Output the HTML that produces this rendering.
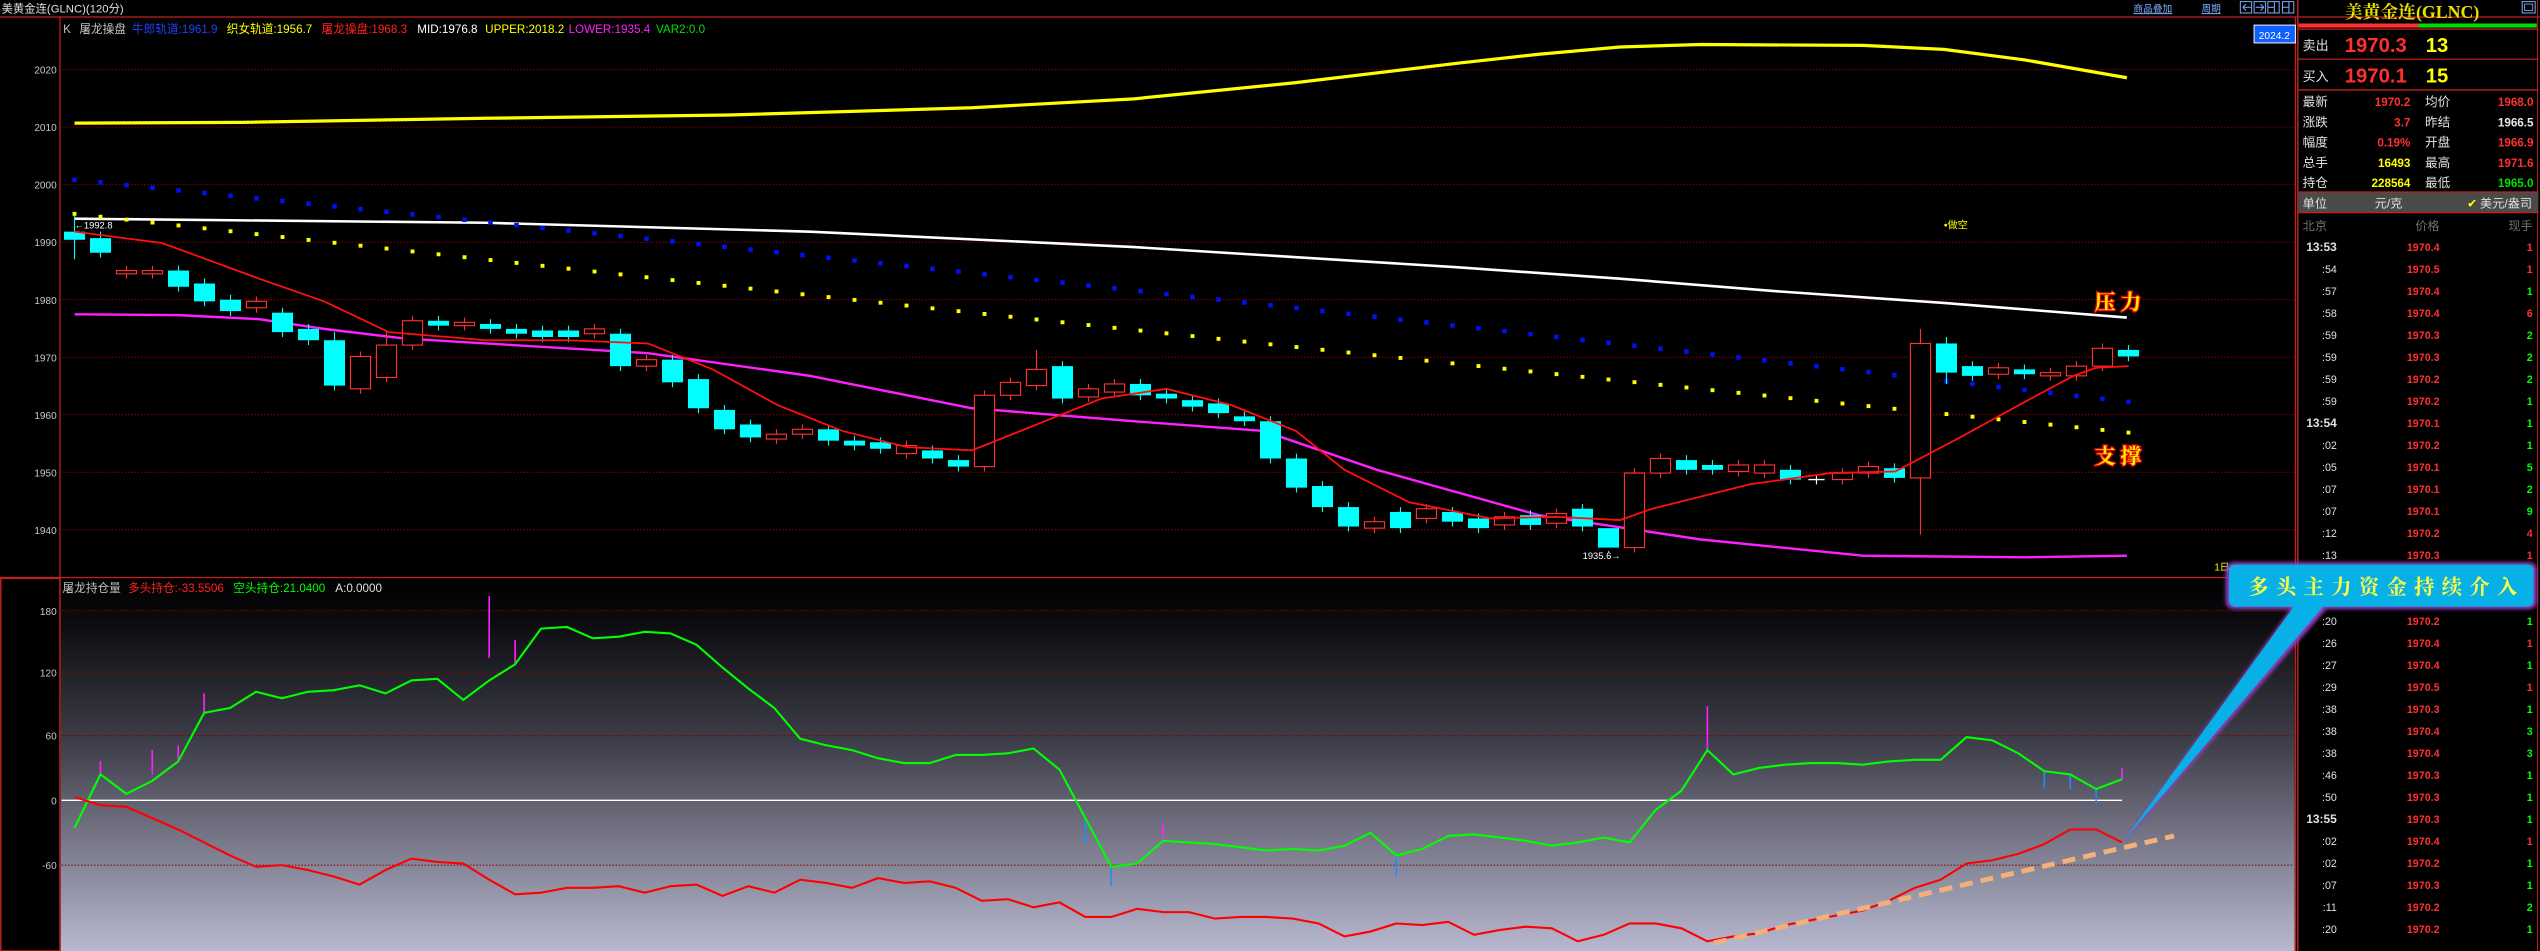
<!DOCTYPE html>
<html><head><meta charset="utf-8"><style>
html,body{margin:0;padding:0;background:#000;overflow:hidden}
svg{display:block}
text{font-family:"Liberation Sans","Noto Sans CJK SC",sans-serif}
.s{font-family:"Liberation Serif","Noto Serif CJK SC",serif}
</style></head><body>
<svg id="s" xmlns="http://www.w3.org/2000/svg" width="2540" height="951" viewBox="0 0 1568 587" preserveAspectRatio="none">
<defs>
<linearGradient id="lg" x1="0" y1="357" x2="0" y2="587" gradientUnits="userSpaceOnUse">
<stop offset="0" stop-color="#000"/><stop offset="0.12" stop-color="#0c0c10"/><stop offset="0.45" stop-color="#40404c"/><stop offset="1" stop-color="#b8b8d0"/>
</linearGradient>
<filter id="gl" x="-20%" y="-20%" width="140%" height="140%"><feGaussianBlur stdDeviation="1.2"/></filter>
</defs>
<rect width="1568" height="587" fill="#000"/>
<text x="1" y="7.8" font-size="7" fill="#e0e0e0">美黄金连(GLNC)(120分)</text>
<text x="1317" y="7.5" font-size="6" fill="#80b0ff" text-decoration="underline">商品叠加</text>
<text x="1359" y="7.5" font-size="6" fill="#80b0ff" text-decoration="underline">周期</text>
<g fill="none" stroke="#80b0ff" stroke-width="0.6">
<rect x="1383" y="1" width="7" height="7"/><path d="M1384.5 4.5h5M1384.5 4.5l2-2M1384.5 4.5l2 2"/>
<rect x="1391.5" y="1" width="7" height="7"/><path d="M1392.5 4.5h5M1397.5 4.5l-2-2M1397.5 4.5l-2 2"/>
<rect x="1400" y="1" width="7" height="7"/><path d="M1400 4.5h4M1404 1v7"/>
<rect x="1409" y="1" width="7" height="7"/><path d="M1409 4.5h4M1413 1v7"/>
</g>
<line x1="0" y1="10.5" x2="1568" y2="10.5" stroke="#c02020" stroke-width="0.8"/>
<line x1="37" y1="10" x2="37" y2="587" stroke="#c02020" stroke-width="0.8"/>
<line x1="1417" y1="10" x2="1417" y2="587" stroke="#c02020" stroke-width="0.8"/>
<g stroke="#8a0000" stroke-width="0.6" stroke-dasharray="1,1">
<line x1="37" y1="43" x2="1416" y2="43"/><line x1="37" y1="78.5" x2="1416" y2="78.5"/><line x1="37" y1="114" x2="1416" y2="114"/><line x1="37" y1="149.5" x2="1416" y2="149.5"/><line x1="37" y1="185" x2="1416" y2="185"/><line x1="37" y1="220.5" x2="1416" y2="220.5"/><line x1="37" y1="256" x2="1416" y2="256"/><line x1="37" y1="291.5" x2="1416" y2="291.5"/><line x1="37" y1="327" x2="1416" y2="327"/>
</g>
<g font-size="6.2" fill="#c8c8c8" text-anchor="end">
<text x="35" y="45.5">2020</text><text x="35" y="81">2010</text><text x="35" y="116.5">2000</text><text x="35" y="152">1990</text><text x="35" y="187.5">1980</text><text x="35" y="223">1970</text><text x="35" y="258.5">1960</text><text x="35" y="294">1950</text><text x="35" y="329.5">1940</text>
</g>
<g font-size="7.2">
<text x="39" y="20.5" fill="#c0c0c0">K</text>
<text x="49" y="20.5" fill="#c0c0c0">屠龙操盘</text>
<text x="81.5" y="20.5" fill="#2040ff">牛郎轨道:1961.9</text>
<text x="140" y="20.5" fill="#ffff00">织女轨道:1956.7</text>
<text x="198.5" y="20.5" fill="#ff2020">屠龙操盘:1968.3</text>
<text x="257.6" y="20.5" fill="#ffffff">MID:1976.8</text>
<text x="299.5" y="20.5" fill="#ffff00">UPPER:2018.2</text>
<text x="351" y="20.5" fill="#ff20ff">LOWER:1935.4</text>
<text x="405" y="20.5" fill="#00e000">VAR2:0.0</text>
</g>
<rect x="1391.5" y="15.5" width="25.5" height="11" fill="#1060ff" stroke="#fff" stroke-width="0.6"/>
<text x="1404" y="24" font-size="6.3" fill="#fff" text-anchor="middle">2024.2</text>
<polyline fill="none" stroke="#ffff00" stroke-width="2" points="46,76 150,75.5 300,73 450,71 600,66.5 700,61 800,51 900,39 950,33.5 1000,29 1050,27.5 1150,28 1200,30.5 1250,37 1313,48"/>
<polyline fill="none" stroke="#ffffff" stroke-width="1.6" points="46,135 300,137.5 500,143 700,152.5 900,165 1000,172 1100,180 1200,187 1250,191 1313,196"/>
<g id="dots"></g>
<polyline fill="none" stroke="#ff20ff" stroke-width="1.5" points="46,194 110,194.5 160,197 200,203 250,209 300,212 400,218 500,232 600,252 700,260 780,266 850,290 950,318 1050,333 1150,343 1250,344 1313,343"/>
<g id="cand"></g>
<polyline fill="none" stroke="#ff1010" stroke-width="1.1" points="46,143 100,150 160,172 200,186 240,205 300,210 350,210 400,212 440,228 480,250 520,266 560,276 600,278 640,262 680,246 720,240 760,250 800,266 830,290 870,310 920,320 960,319 1000,321 1020,314 1080,299 1130,292 1170,291 1210,270 1250,248 1280,232 1294,227 1314,226"/>
<text x="46" y="141" font-size="5.8" fill="#ffffff">←1992.8</text>
<text x="977" y="345" font-size="5.8" fill="#ffffff">1935.6→</text>
<text x="1200" y="141" font-size="6.3" fill="#ffff00">•做空</text>
<text x="1293" y="191" font-size="13" class="s" font-weight="bold" fill="#ffee00" stroke="#e00000" stroke-width="1.6" paint-order="stroke" letter-spacing="3">压力</text>
<text x="1293" y="286" font-size="13" class="s" font-weight="bold" fill="#ffee00" stroke="#e00000" stroke-width="1.6" paint-order="stroke" letter-spacing="3">支撑</text>
<text x="1367" y="352" font-size="6" fill="#ffff00">1日</text>
<line x1="0" y1="356.5" x2="1417" y2="356.5" stroke="#c02020" stroke-width="0.9"/>
<rect x="37.5" y="357" width="1379" height="230" fill="url(#lg)"/>
<rect x="0.5" y="357" width="36.5" height="230" fill="#000" stroke="#c02020" stroke-width="0.9"/>
<g stroke="#8a0000" stroke-width="0.6" stroke-dasharray="1,1">
<line x1="38" y1="377" x2="1416" y2="377"/><line x1="38" y1="415" x2="1416" y2="415"/><line x1="38" y1="454" x2="1416" y2="454"/><line x1="38" y1="534" x2="1416" y2="534"/>
</g>
<line x1="38" y1="494" x2="1310" y2="494" stroke="#ffffff" stroke-width="0.9"/>
<g font-size="6.2" fill="#c8c8c8" text-anchor="end">
<text x="35" y="379.5">180</text><text x="35" y="417.5">120</text><text x="35" y="456.5">60</text><text x="35" y="496.5">0</text><text x="35" y="536.5">-60</text>
</g>
<g font-size="7.2">
<text x="38.6" y="365.5" fill="#c0c0c0">屠龙持仓量</text>
<text x="79" y="365.5" fill="#ff2020">多头持仓:-33.5506</text>
<text x="144" y="365.5" fill="#00ff00">空头持仓:21.0400</text>
<text x="207" y="365.5" fill="#e0e0e0">A:0.0000</text>
</g>
<g stroke-width="1">
<line x1="302" y1="368" x2="302" y2="406" stroke="#ff20ff"/><line x1="318" y1="395" x2="318" y2="410" stroke="#ff20ff"/>
<line x1="126" y1="428" x2="126" y2="440" stroke="#ff20ff"/><line x1="94" y1="463" x2="94" y2="478" stroke="#ff20ff"/><line x1="110" y1="460" x2="110" y2="470" stroke="#ff20ff"/><line x1="62" y1="470" x2="62" y2="478" stroke="#ff20ff"/>
<line x1="1054" y1="436" x2="1054" y2="463" stroke="#ff20ff"/><line x1="718" y1="508" x2="718" y2="519" stroke="#ff20ff"/><line x1="1310" y1="474" x2="1310" y2="481" stroke="#ff20ff"/>
<line x1="670" y1="505" x2="670" y2="521" stroke="#1890ff"/><line x1="686" y1="535" x2="686" y2="547" stroke="#1890ff"/><line x1="862" y1="528" x2="862" y2="541" stroke="#1890ff"/><line x1="1294" y1="487" x2="1294" y2="496" stroke="#1890ff"/><line x1="1262" y1="476" x2="1262" y2="486" stroke="#1890ff"/><line x1="1278" y1="478" x2="1278" y2="487" stroke="#1890ff"/>
</g>
<polyline fill="none" stroke="#00ff00" stroke-width="1.3" points="46,511 62,478 78,490 94,482 110,470 126,440 142,437 158,427 174,431 190,427 206,426 222,423 238,428 254,420 270,419 286,432 302,420 318,410 334,388 350,387 366,394 382,393 398,390 414,391 430,398 446,412 462,425 478,437 494,456 510,460 526,463 542,468 558,471 574,471 590,466 606,466 622,465 638,462 654,475 670,505 686,535 702,533 718,519 734,520 750,521 766,523 782,525 798,524 814,525 830,522 846,514 862,528 878,524 894,516 910,515 926,517 942,519 958,522 974,520 990,517 1006,520 1022,500 1038,488 1054,463 1070,478 1086,474 1102,472 1118,471 1134,471 1150,472 1166,470 1182,469 1198,469 1214,455 1230,457 1246,465 1262,476 1278,478 1294,487 1310,481"/>
<polyline fill="none" stroke="#ff0000" stroke-width="1.3" points="46,492 62,497 78,498 94,505 110,512 126,520 142,528 158,535 174,534 190,537 206,541 222,546 238,537 254,530 270,532 286,533 302,543 318,552 334,551 350,548 366,548 382,547 398,551 414,547 430,546 446,553 462,547 478,551 494,543 510,545 526,548 542,542 558,545 574,544 590,548 606,556 622,555 638,560 654,557 670,566 686,566 702,561 718,563 734,563 750,567 766,566 782,566 798,567 814,570 830,578 846,575 862,570 878,571 894,569 910,577 926,574 942,572 958,573 974,581 990,577 1006,570 1022,570 1038,573 1054,581 1070,578 1086,576 1102,571 1118,568 1134,565 1150,562 1166,556 1182,548 1198,543 1214,533 1230,531 1246,527 1262,521 1278,512 1294,512 1310,520"/>
<line x1="1058" y1="582" x2="1342" y2="516" stroke="#f4b07a" stroke-width="3" stroke-dasharray="8,5"/>
<line x1="1418.5" y1="0" x2="1418.5" y2="587" stroke="#c02020" stroke-width="0.9"/>
<line x1="1566.5" y1="0" x2="1566.5" y2="587" stroke="#c02020" stroke-width="0.6"/>
<text x="1489" y="11" font-size="11" class="s" font-weight="bold" fill="#e8e000" text-anchor="middle">美黄金连(GLNC)</text>
<rect x="1557" y="1" width="8" height="7" fill="none" stroke="#80b0ff" stroke-width="0.6"/><rect x="1558.5" y="2.5" width="5" height="4" fill="none" stroke="#80b0ff" stroke-width="0.5"/>
<rect x="1419" y="14.5" width="74" height="2.5" fill="#ff3030"/><rect x="1493" y="14.5" width="73" height="2.5" fill="#00e000"/>
<g stroke="#c02020" stroke-width="0.8">
<line x1="1419" y1="18" x2="1567" y2="18"/><line x1="1419" y1="36.5" x2="1567" y2="36.5"/><line x1="1419" y1="55.5" x2="1567" y2="55.5"/>
</g>
<text x="1421.5" y="31" font-size="8" fill="#e0e0e0">卖出</text>
<text x="1447.5" y="32" font-size="12.5" font-weight="bold" fill="#ff3030">1970.3</text>
<text x="1497.5" y="32" font-size="12.5" font-weight="bold" fill="#ffff00">13</text>
<text x="1421.5" y="50" font-size="8" fill="#e0e0e0">买入</text>
<text x="1447.5" y="51" font-size="12.5" font-weight="bold" fill="#ff3030">1970.1</text>
<text x="1497.5" y="51" font-size="12.5" font-weight="bold" fill="#ffff00">15</text>
<g font-size="7.8" fill="#e0e0e0">
<text x="1421.5" y="65.5">最新</text><text x="1421.5" y="78">涨跌</text><text x="1421.5" y="90.5">幅度</text><text x="1421.5" y="103">总手</text><text x="1421.5" y="115.5">持仓</text>
<text x="1497" y="65.5">均价</text><text x="1497" y="78">昨结</text><text x="1497" y="90.5">开盘</text><text x="1497" y="103">最高</text><text x="1497" y="115.5">最低</text>
</g>
<g font-size="7.2" font-weight="bold" text-anchor="end" font-family="Liberation Mono">
<text x="1488" y="65.5" fill="#ff3030">1970.2</text><text x="1488" y="78" fill="#ff3030">3.7</text><text x="1488" y="90.5" fill="#ff3030">0.19%</text><text x="1488" y="103" fill="#ffff00">16493</text><text x="1488" y="115.5" fill="#ffff00">228564</text>
<text x="1564" y="65.5" fill="#ff3030">1968.0</text><text x="1564" y="78" fill="#e8e8e8">1966.5</text><text x="1564" y="90.5" fill="#ff3030">1966.9</text><text x="1564" y="103" fill="#ff3030">1971.6</text><text x="1564" y="115.5" fill="#00e000">1965.0</text>
</g>
<rect x="1419" y="118.5" width="148" height="12.5" fill="#4a4a4a"/>
<line x1="1419" y1="118.5" x2="1567" y2="118.5" stroke="#c02020" stroke-width="0.8"/><line x1="1419" y1="131.2" x2="1567" y2="131.2" stroke="#c02020" stroke-width="0.8"/>
<g font-size="7.5" fill="#e0e0e0"><text x="1421.5" y="128">单位</text><text x="1466" y="128">元/克</text><text x="1523" y="128" fill="#ffff00">✔</text><text x="1531" y="128">美元/盎司</text></g>
<g font-size="7.5" fill="#707070"><text x="1421.5" y="142">北京</text><text x="1506" y="142" text-anchor="end">价格</text><text x="1563.5" y="142" text-anchor="end">现手</text></g>
<g font-size="6.6" font-weight="bold">
<g fill="#e0e0e0" text-anchor="end" font-weight="normal">
<text x="1442.6" y="155" font-weight="bold" font-size="7.4">13:53</text><text x="1442.6" y="168.6">:54</text><text x="1442.6" y="182.2">:57</text><text x="1442.6" y="195.7">:58</text><text x="1442.6" y="209.3">:59</text><text x="1442.6" y="222.9">:59</text><text x="1442.6" y="236.5">:59</text><text x="1442.6" y="250.1">:59</text><text x="1442.6" y="263.6" font-weight="bold" font-size="7.4">13:54</text><text x="1442.6" y="277.2">:02</text><text x="1442.6" y="290.8">:05</text><text x="1442.6" y="304.4">:07</text><text x="1442.6" y="318">:07</text><text x="1442.6" y="331.5">:12</text><text x="1442.6" y="345.1">:13</text>
<text x="1442.6" y="385.9">:20</text><text x="1442.6" y="399.5">:26</text><text x="1442.6" y="413">:27</text><text x="1442.6" y="426.6">:29</text><text x="1442.6" y="440.2">:38</text><text x="1442.6" y="453.8">:38</text><text x="1442.6" y="467.4">:38</text><text x="1442.6" y="480.9">:46</text><text x="1442.6" y="494.5">:50</text><text x="1442.6" y="508.1" font-weight="bold" font-size="7.4">13:55</text><text x="1442.6" y="521.7">:02</text><text x="1442.6" y="535.3">:02</text><text x="1442.6" y="548.8">:07</text><text x="1442.6" y="562.4">:11</text><text x="1442.6" y="576">:20</text>
</g>
<g fill="#ff3030" text-anchor="end">
<text x="1506" y="155">1970.4</text><text x="1506" y="168.6">1970.5</text><text x="1506" y="182.2">1970.4</text><text x="1506" y="195.7">1970.4</text><text x="1506" y="209.3">1970.3</text><text x="1506" y="222.9">1970.3</text><text x="1506" y="236.5">1970.2</text><text x="1506" y="250.1">1970.2</text><text x="1506" y="263.6">1970.1</text><text x="1506" y="277.2">1970.2</text><text x="1506" y="290.8">1970.1</text><text x="1506" y="304.4">1970.1</text><text x="1506" y="318">1970.1</text><text x="1506" y="331.5">1970.2</text><text x="1506" y="345.1">1970.3</text>
<text x="1506" y="385.9">1970.2</text><text x="1506" y="399.5">1970.4</text><text x="1506" y="413">1970.4</text><text x="1506" y="426.6">1970.5</text><text x="1506" y="440.2">1970.3</text><text x="1506" y="453.8">1970.4</text><text x="1506" y="467.4">1970.4</text><text x="1506" y="480.9">1970.3</text><text x="1506" y="494.5">1970.3</text><text x="1506" y="508.1">1970.3</text><text x="1506" y="521.7">1970.4</text><text x="1506" y="535.3">1970.2</text><text x="1506" y="548.8">1970.3</text><text x="1506" y="562.4">1970.2</text><text x="1506" y="576">1970.2</text>
</g>
<g text-anchor="end">
<text x="1563.5" y="155" fill="#ff3030">1</text><text x="1563.5" y="168.6" fill="#ff3030">1</text><text x="1563.5" y="182.2" fill="#00ff00">1</text><text x="1563.5" y="195.7" fill="#ff3030">6</text><text x="1563.5" y="209.3" fill="#00ff00">2</text><text x="1563.5" y="222.9" fill="#00ff00">2</text><text x="1563.5" y="236.5" fill="#00ff00">2</text><text x="1563.5" y="250.1" fill="#00ff00">1</text><text x="1563.5" y="263.6" fill="#00ff00">1</text><text x="1563.5" y="277.2" fill="#00ff00">1</text><text x="1563.5" y="290.8" fill="#00ff00">5</text><text x="1563.5" y="304.4" fill="#00ff00">2</text><text x="1563.5" y="318" fill="#00ff00">9</text><text x="1563.5" y="331.5" fill="#ff3030">4</text><text x="1563.5" y="345.1" fill="#ff3030">1</text>
<text x="1563.5" y="385.9" fill="#00ff00">1</text><text x="1563.5" y="399.5" fill="#ff3030">1</text><text x="1563.5" y="413" fill="#00ff00">1</text><text x="1563.5" y="426.6" fill="#ff3030">1</text><text x="1563.5" y="440.2" fill="#00ff00">1</text><text x="1563.5" y="453.8" fill="#00ff00">3</text><text x="1563.5" y="467.4" fill="#00ff00">3</text><text x="1563.5" y="480.9" fill="#00ff00">1</text><text x="1563.5" y="494.5" fill="#00ff00">1</text><text x="1563.5" y="508.1" fill="#00ff00">1</text><text x="1563.5" y="521.7" fill="#ff3030">1</text><text x="1563.5" y="535.3" fill="#00ff00">1</text><text x="1563.5" y="548.8" fill="#00ff00">1</text><text x="1563.5" y="562.4" fill="#00ff00">2</text><text x="1563.5" y="576" fill="#00ff00">1</text>
</g>
</g>
<g>
<path d="M1374 352 Q1374 347 1380 347 L1560 347 Q1566 347 1566 352 L1566 371 Q1566 376 1560 376 L1436 376 L1310 521 L1414 376 L1380 376 Q1374 376 1374 371 Z" fill="#9040c0" filter="url(#gl)"/>
<path d="M1376 352 Q1376 348.5 1381 348.5 L1559 348.5 Q1564 348.5 1564 352 L1564 370 Q1564 374.5 1559 374.5 L1434 374.5 L1311 519 L1416 374.5 L1381 374.5 Q1376 374.5 1376 370 Z" fill="#08b0e8"/>
<text x="1388" y="366.5" font-size="12.5" class="s" font-weight="bold" fill="#ffff40" textLength="166" lengthAdjust="spacing">多头主力资金持续介入</text>
</g>
</svg>
<script>
(function(){
var NS="http://www.w3.org/2000/svg";
function el(p,n,a){var e=document.createElementNS(NS,n);for(var k in a)e.setAttribute(k,a[k]);p.appendChild(e);return e;}
var C=[["c",143,148],["c",147,156],["r",167,169],["r",167,169],["c",167,177],["c",175,186],["c",185,192],["r",186,190],["c",193,205],["c",203,210],["c",210,238],["r",220,240],["r",213,233],["r",198,213],["c",198,201],["r",199,201],["c",200,203],["c",203,206],["c",204,208],["c",204,208],["r",203,206],["c",206,226],["r",222,226],["c",222,236],["c",234,252],["c",253,265],["c",262,270],["r",268,271],["r",265,268],["c",265,272],["c",272,275],["c",273,277],["r",275,280],["c",278,283],["c",284,288],["r",244,288],["r",236,244],["r",228,238],["c",226,246],["r",240,245],["r",237,242],["c",237,244],["c",243,246],["c",247,251],["c",249,255],["c",257,260],["c",260,283],["c",283,301],["c",300,313],["c",313,325],["r",322,326],["c",316,326],["r",314,320],["c",316,322],["c",320,326],["r",319,324],["c",318,324],["r",317,323],["c",314,325],["c",326,338],["r",292,338],["r",283,292],["c",284,290],["c",287,290],["r",287,291],["r",287,292],["c",290,296],["w",296,296],["r",292,296],["r",288,292],["c",289,295],["r",212,295],["c",212,230],["c",226,232],["r",227,231],["c",228,231],["r",230,232],["r",226,232],["r",215,226],["c",216,220]];
var g=document.getElementById("cand"),d=document.getElementById("dots");
var wt={0:133,1:143,10:205,12:205,37:216,59:340,71:203,72:208,78:212};
for(var i=0;i<C.length;i++){
 var x=46+i*16.05,t=C[i][1],b=C[i][2],ty=C[i][0];
 var col=ty=="c"?"#00ffff":(ty=="r"?"#ff3030":"#ffffff");
 var top=wt[i]!==undefined?wt[i]:t-3,bot=b+3;
 if(i==0)bot=160; if(i==71)bot=330; if(i==72)bot=237;
 el(g,"line",{x1:x,y1:top,x2:x,y2:bot,stroke:col,"stroke-width":0.7});
 if(ty=="c")el(g,"rect",{x:x-6.5,y:t,width:13,height:Math.max(b-t,1.5),fill:"#00ffff"});
 else if(ty=="r")el(g,"rect",{x:x-6.2,y:t,width:12.4,height:Math.max(b-t,1.5),fill:"#000","stroke":"#ff3030","stroke-width":0.7});
 else el(g,"line",{x1:x-5,y1:t,x2:x+5,y2:t,stroke:"#fff","stroke-width":0.8});
 var f=(x-46)/1268;
 var by=111+137*f-2.4*Math.sin(Math.PI*f);
 var yy=132+135*f+2*Math.sin(Math.PI*f);
 el(d,"rect",{x:x-1.4,y:by-1.4,width:2.8,height:2.8,fill:"#0010f0"});
 el(d,"rect",{x:x-1.2,y:yy-1.2,width:2.4,height:2.4,fill:"#ffff00"});
}
})();
</script>
</body></html>
